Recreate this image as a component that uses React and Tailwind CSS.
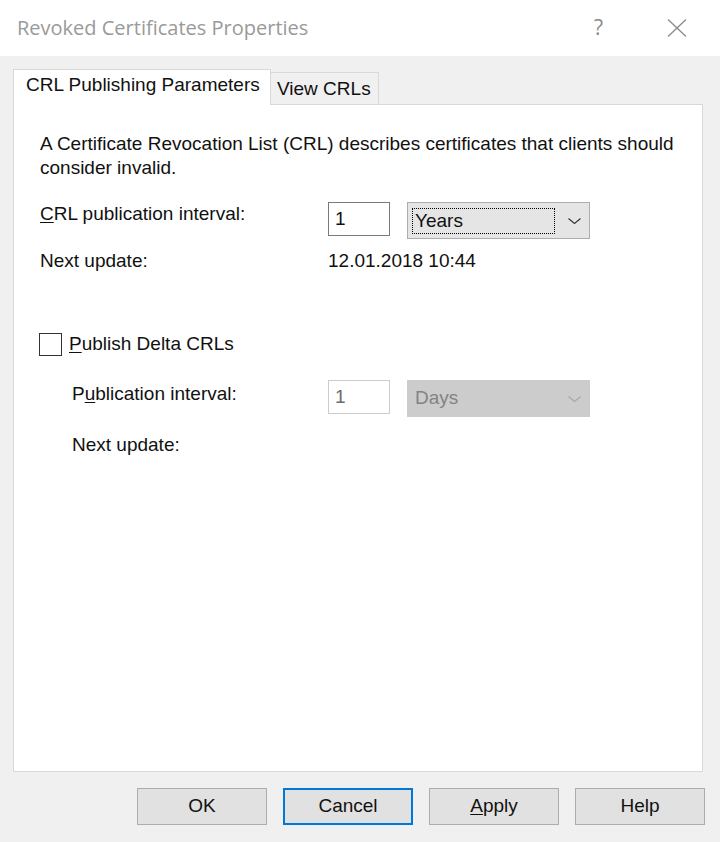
import React from 'react';

const Chevron = ({ color = '#333333' }) => (
  <svg width="15" height="8" viewBox="0 0 15 8" fill="none">
    <polyline points="1.5,1.5 7.5,6.5 13.5,1.5" stroke={color} strokeWidth="1.1" />
  </svg>
);

const Label = ({ children, className = '' }) => (
  <div className={`leading-[24px] whitespace-nowrap ${className}`}>{children}</div>
);

const RevokedCertificatesProperties = () => {
  return (
    <div className="w-[720px] h-[842px] bg-[#f0f0f0] flex flex-col overflow-hidden text-[#111111] text-[19px] font-['Liberation_Sans',Arial,sans-serif]">
      {/* title bar */}
      <div className="h-[56px] shrink-0 bg-white flex items-center">
        <div className="pl-[17px] text-[20px] text-[#9a9a9a] font-['Open_Sans',sans-serif]">
          Revoked Certificates Properties
        </div>
        <div className="ml-auto flex items-center pr-[33px]">
          <span className="text-[21px] text-[#8a8a8a] font-['Open_Sans',sans-serif] mr-[64px]">?</span>
          <svg width="20" height="18" viewBox="0 0 20 18">
            <line x1="1" y1="0.5" x2="19" y2="17.5" stroke="#8a8a8a" strokeWidth="1.3" />
            <line x1="19" y1="0.5" x2="1" y2="17.5" stroke="#8a8a8a" strokeWidth="1.3" />
          </svg>
        </div>
      </div>

      <div className="flex-1 flex flex-col pt-[13px]">
        {/* tabs */}
        <div className="flex items-end h-[36px] ml-[13px] -mb-px relative z-10">
          <div className="h-[36px] w-[258px] bg-white border border-b-0 border-[#d9d9d9] pl-[12px] pt-[3px] leading-[24px] whitespace-nowrap">
            CRL Publishing Parameters
          </div>
          <div className="h-[33px] w-[108px] bg-[#f0f0f0] border border-l-0 border-[#d9d9d9] pl-[6px] pt-[4px] leading-[24px] whitespace-nowrap">
            View CRLs
          </div>
        </div>

        {/* panel */}
        <div className="flex-1 bg-white border border-[#d9d9d9] ml-[13px] mr-[17px] pl-[26px]">
          <div className="mt-[27px] leading-[24px] whitespace-nowrap">
            A Certificate Revocation List (CRL) describes certificates that clients should
            <br />
            consider invalid.
          </div>

          <div className="flex items-start mt-[22px]">
            <Label className="w-[288px]">
              <span className="underline underline-offset-2">C</span>RL publication interval:
            </Label>
            <div className="w-[62px] h-[34px] border border-[#7a7a7a] pl-[6px] flex items-center">1</div>
            <div className="ml-[17px] w-[183px] h-[37px] bg-[#e5e5e5] border border-[#adadad] flex items-center">
              <div className="ml-[4px] w-[143px] h-[26px] border border-dotted border-black pl-[2px] flex items-center leading-none">
                Years
              </div>
              <div className="ml-auto mr-[7px] flex items-center">
                <Chevron />
              </div>
            </div>
          </div>

          <div className="flex items-start mt-[10px]">
            <Label className="w-[288px]">Next update:</Label>
            <Label>12.01.2018 10:44</Label>
          </div>

          <div className="flex items-start mt-[59px] -ml-[1px]">
            <div className="w-[23px] h-[23px] mt-[1px] border border-[#333333] bg-white" />
            <Label className="ml-[7px]">
              <span className="underline underline-offset-2">P</span>ublish Delta CRLs
            </Label>
          </div>

          <div className="flex items-start mt-[24px] pl-[32px]">
            <Label className="w-[256px] mt-[2px]">
              P<span className="underline underline-offset-2">u</span>blication interval:
            </Label>
            <div className="w-[62px] h-[34px] border border-[#cccccc] pl-[6px] flex items-center text-[#6d6d6d]">1</div>
            <div className="ml-[17px] w-[183px] h-[37px] bg-[#cccccc] border border-[#cccccc] flex items-center pl-[7px] text-[#838383]">
              Days
              <div className="ml-auto mr-[7px] flex items-center">
                <Chevron color="#a8a8a8" />
              </div>
            </div>
          </div>

          <div className="mt-[16px] pl-[32px]">
            <Label>Next update:</Label>
          </div>
        </div>

        {/* buttons */}
        <div className="h-[37px] mt-[16px] mb-[17px] pr-[15px] flex justify-end gap-[16px]">
          <button className="w-[130px] h-[37px] bg-[#e1e1e1] border border-[#adadad] flex items-center justify-center">OK</button>
          <button className="w-[130px] h-[37px] bg-[#e1e1e1] border-2 border-[#0078d7] flex items-center justify-center">Cancel</button>
          <button className="w-[130px] h-[37px] bg-[#e1e1e1] border border-[#adadad] flex items-center justify-center">
            <span><span className="underline underline-offset-2">A</span>pply</span>
          </button>
          <button className="w-[130px] h-[37px] bg-[#e1e1e1] border border-[#adadad] flex items-center justify-center">Help</button>
        </div>
      </div>
    </div>
  );
};

export default RevokedCertificatesProperties;
